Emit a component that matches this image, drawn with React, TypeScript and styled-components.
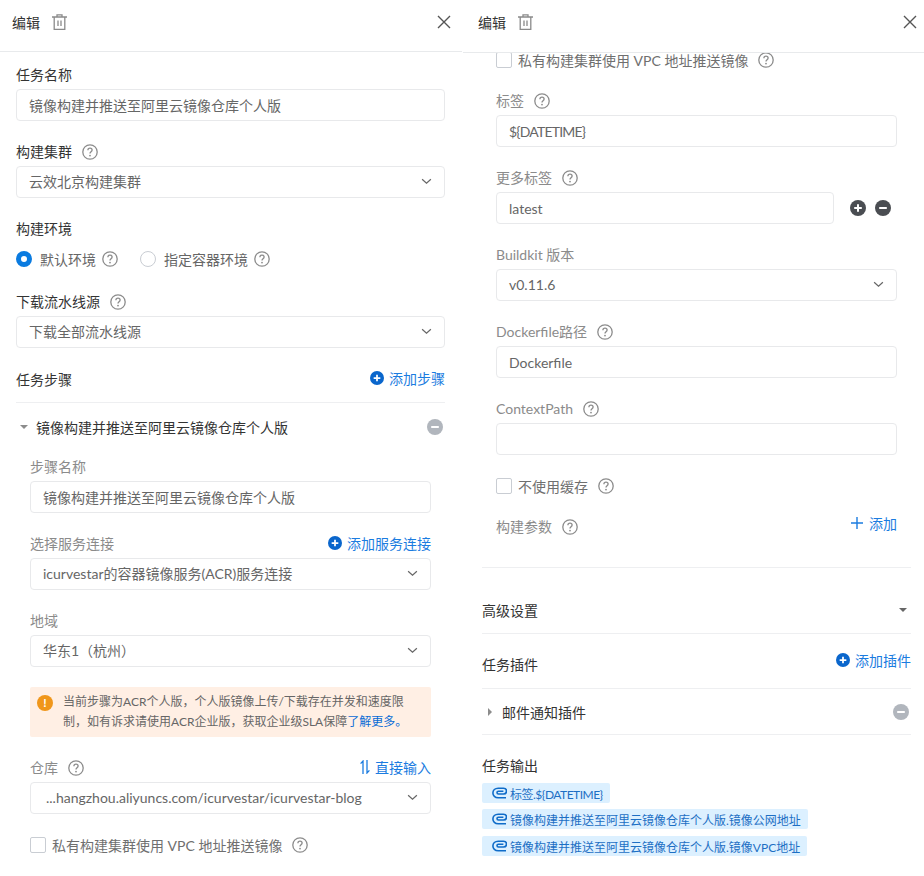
import styled, { createGlobalStyle } from "styled-components";

const GlobalStyle = createGlobalStyle`
  html, body {
    margin: 0;
    padding: 0;
    background: #fff;
  }
  body {
    font-family: Lato, "Noto Sans CJK SC", sans-serif;
    font-size: 14px;
    color: #333;
  }
`;

const HelpIcon = () => (
  <HelpSvg viewBox="0 0 16 16" width="16" height="16" fill="none">
    <circle cx="8" cy="8" r="7.2" stroke="#8c8c8c" strokeWidth="1.3" />
    <path
      d="M5.9 6.2c0-1.2.9-2 2.1-2s2.1.8 2.1 1.9c0 1.7-2.1 1.7-2.1 3.4"
      stroke="#8c8c8c"
      strokeWidth="1.3"
    />
    <circle cx="8" cy="11.6" r=".9" fill="#8c8c8c" />
  </HelpSvg>
);

const TrashIcon = () => (
  <svg viewBox="0 0 15 16" width="15" height="16" fill="none" stroke="#8a8a8a" strokeWidth="1.3">
    <path d="M0 3h15M5 3V.8h5V3M2.2 3v12.3h10.6V3M6 6.5v5.5M9 6.5v5.5" />
  </svg>
);

const CloseIcon = () => (
  <svg viewBox="0 0 14 14" width="14" height="14" stroke="#555" strokeWidth="1.4">
    <path d="M1 1l12 12M13 1L1 13" />
  </svg>
);

const Chevron = () => (
  <svg viewBox="0 0 12 8" width="11" height="7" fill="none" stroke="#666" strokeWidth="1.4">
    <path d="M1 1.5l5 4.5 5-4.5" />
  </svg>
);

const RoundIcon = ({ color, size, plus }: { color: string; size: number; plus?: boolean }) => (
  <svg viewBox="0 0 16 16" width={size} height={size}>
    <circle cx="8" cy="8" r="8" fill={color} />
    <path d={plus ? "M4.2 8h7.6M8 4.2v7.6" : "M4.2 8h7.6"} stroke="#fff" strokeWidth="2" />
  </svg>
);

const SwapIcon = () => (
  <svg viewBox="0 0 10 14" width="10" height="14" fill="none" stroke="#1b7ce0" strokeWidth="1.3">
    <path d="M3 14V1L.6 3.6M7 0v13l2.4-2.6" />
  </svg>
);

const ClipIcon = () => (
  <svg viewBox="0 0 15 12" width="15" height="12" fill="none" stroke="#0f6cc9" strokeWidth="1.6">
    <path d="M14 10.8H6.2C3 10.8.9 8.7.9 6S3 1.2 6.2 1.2h5.3c2 0 3 1.4 3 2.9S13.5 7 11.5 7H6.4C5.5 7 5 6.4 5 5.6s.5-1.4 1.4-1.4h5" />
  </svg>
);

const Label = ({ text, help }: { text: string; help?: boolean }) => (
  <LabelText>
    {text}
    {help && <HelpIcon />}
  </LabelText>
);

const App = () => {
  return (
    <>
      <GlobalStyle />
      <Page>
        <Panel $width={462}>
          <Header $height={52} $inset={0} $right={11}>
            <HeaderLeft>
              <HeaderTitle>编辑</HeaderTitle>
              <TrashIcon />
            </HeaderLeft>
            <CloseIcon />
          </Header>
          <Body $left={16} $right={17} $top={13}>
            <Field>
              <TopLabel>任务名称</TopLabel>
              <Box>镜像构建并推送至阿里云镜像仓库个人版</Box>
            </Field>
            <Field>
              <TopLabel>
                构建集群
                <HelpIcon />
              </TopLabel>
              <Box $select>
                云效北京构建集群
                <Chevron />
              </Box>
            </Field>
            <Field>
              <TopLabel>构建环境</TopLabel>
              <RadioRow>
                <RadioOption>
                  <Radio $checked />
                  默认环境
                  <HelpIcon />
                </RadioOption>
                <RadioOption>
                  <Radio />
                  指定容器环境
                  <HelpIcon />
                </RadioOption>
              </RadioRow>
            </Field>
            <Field>
              <TopLabel>
                下载流水线源
                <HelpIcon />
              </TopLabel>
              <Box $select>
                下载全部流水线源
                <Chevron />
              </Box>
            </Field>
            <SectionHead>
              <SectionTitle>任务步骤</SectionTitle>
              <AddLink>
                <RoundIcon color="#0a66cc" size={14} plus />
                添加步骤
              </AddLink>
            </SectionHead>
            <StepHead>
              <StepName>
                <CaretDown />
                镜像构建并推送至阿里云镜像仓库个人版
              </StepName>
              <RoundIcon color="#b1b6bd" size={16} />
            </StepHead>
            <Nested>
              <Field>
                <Label text="步骤名称" />
                <Box>镜像构建并推送至阿里云镜像仓库个人版</Box>
              </Field>
              <Field>
                <LabelRow>
                  <Label text="选择服务连接" />
                  <AddLink>
                    <RoundIcon color="#0a66cc" size={14} plus />
                    添加服务连接
                  </AddLink>
                </LabelRow>
                <Box $select>
                  icurvestar的容器镜像服务(ACR)服务连接
                  <Chevron />
                </Box>
              </Field>
              <Field>
                <Label text="地域" />
                <Box $select>
                  华东1（杭州）
                  <Chevron />
                </Box>
              </Field>
              <Alert>
                <AlertIcon>!</AlertIcon>
                <AlertText>
                  <div>当前步骤为ACR个人版，个人版镜像上传/下载存在并发和速度限</div>
                  <div>
                    制，如有诉求请使用ACR企业版，获取企业级SLA保障<BlueText>了解更多。</BlueText>
                  </div>
                </AlertText>
              </Alert>
              <Field>
                <LabelRow>
                  <Label text="仓库" help />
                  <AddLink>
                    <SwapIcon />
                    直接输入
                  </AddLink>
                </LabelRow>
                <Box $indent={15} $select>
                  ...hangzhou.aliyuncs.com/icurvestar/icurvestar-blog
                  <Chevron />
                </Box>
              </Field>
              <CheckRow>
                <CheckBox />
                <span>私有构建集群使用 VPC 地址推送镜像</span>
                <HelpIcon />
              </CheckRow>
            </Nested>
          </Body>
        </Panel>

        <Panel $width={461}>
          <Header $height={53} $inset={3} $right={7}>
            <HeaderLeft>
              <HeaderTitle>编辑</HeaderTitle>
              <TrashIcon />
            </HeaderLeft>
            <CloseIcon />
          </Header>
          <Body $left={19} $right={13} $top={-3}>
            <Nested>
              <CheckRow>
                <CheckBox />
                <span>私有构建集群使用 VPC 地址推送镜像</span>
                <HelpIcon />
              </CheckRow>
              <Field>
                <Label text="标签" help />
                <Box $tight>{"${DATETIME}"}</Box>
              </Field>
              <Field>
                <Label text="更多标签" help />
                <TagInputRow>
                  <Box>latest</Box>
                  <RoundIcon color="#4a4d52" size={16} plus />
                  <RoundIcon color="#4a4d52" size={16} />
                </TagInputRow>
              </Field>
              <Field>
                <Label text="Buildkit 版本" />
                <Box $select>
                  v0.11.6
                  <Chevron />
                </Box>
              </Field>
              <Field>
                <Label text="Dockerfile路径" help />
                <Box>Dockerfile</Box>
              </Field>
              <Field>
                <Label text="ContextPath" help />
                <Box />
              </Field>
              <CheckRow>
                <CheckBox />
                <span>不使用缓存</span>
                <HelpIcon />
              </CheckRow>
              <ParamRow>
                <Label text="构建参数" help />
                <PlainAdd>
                  <svg viewBox="0 0 12 12" width="12" height="12" stroke="#1b7ce0" strokeWidth="1.4">
                    <path d="M0 6h12M6 0v12" />
                  </svg>
                  添加
                </PlainAdd>
              </ParamRow>
            </Nested>
            <Block $height={65} $pad={13}>
              <SectionTitle>高级设置</SectionTitle>
              <CaretDown $dark />
            </Block>
            <Block $height={54} $pad={14}>
              <SectionTitle>任务插件</SectionTitle>
              <AddLink $raised>
                <RoundIcon color="#0a66cc" size={14} plus />
                添加插件
              </AddLink>
            </Block>
            <Block $height={45} $pad={12}>
              <StepName $small>
                <CaretRight />
                邮件通知插件
              </StepName>
              <MinusWrap>
                <RoundIcon color="#b1b6bd" size={16} />
              </MinusWrap>
            </Block>
            <OutputTitle>任务输出</OutputTitle>
            <TagList>
              <OutputTag $tight>
                <ClipIcon />
                {"标签.${DATETIME}"}
              </OutputTag>
              <OutputTag>
                <ClipIcon />
                镜像构建并推送至阿里云镜像仓库个人版.镜像公网地址
              </OutputTag>
              <OutputTag>
                <ClipIcon />
                镜像构建并推送至阿里云镜像仓库个人版.镜像VPC地址
              </OutputTag>
            </TagList>
          </Body>
        </Panel>
      </Page>
    </>
  );
};

export default App;

const Page = styled.div`
  display: flex;
  justify-content: space-between;
  width: 924px;
  height: 876px;
  overflow: hidden;
`;

const Panel = styled.div<{ $width: number }>`
  display: flex;
  flex-direction: column;
  width: ${({ $width }) => $width}px;
  height: 876px;
  overflow: hidden;
`;

const Header = styled.div<{ $height: number; $inset: number; $right: number }>`
  position: relative;
  z-index: 1;
  flex: none;
  display: flex;
  justify-content: space-between;
  align-items: center;
  box-sizing: border-box;
  height: ${({ $height }) => $height}px;
  padding: 0 ${({ $right }) => $right}px 8px ${({ $inset }) => 12 + $inset}px;
  background: #fff;
  border-bottom: 1px solid #e8eaec;
`;

const HeaderLeft = styled.div`
  display: flex;
  align-items: center;
  gap: 12px;
`;

const HeaderTitle = styled.span`
  font-size: 14px;
  color: #333;
`;

const Body = styled.div<{ $left: number; $right: number; $top: number }>`
  flex: 1;
  min-height: 0;
  padding: 0 ${({ $right }) => $right}px 0 ${({ $left }) => $left}px;
  margin-top: ${({ $top }) => $top}px;
`;

const Field = styled.div`
  margin-bottom: 21px;
`;

const TopLabel = styled.div`
  display: flex;
  align-items: center;
  gap: 10px;
  height: 20px;
  margin-bottom: 4px;
  color: #333;
  line-height: 20px;
`;

const LabelText = styled.div`
  display: flex;
  align-items: center;
  gap: 10px;
  height: 20px;
  margin-bottom: 4px;
  color: #8b8b8b;
  line-height: 20px;
`;

const LabelRow = styled.div`
  display: flex;
  justify-content: space-between;
`;

const HelpSvg = styled.svg`
  flex: none;
`;

const Box = styled.div<{ $indent?: number; $tight?: boolean; $select?: boolean }>`
  flex: 1;
  display: flex;
  justify-content: space-between;
  align-items: center;
  box-sizing: border-box;
  height: 32px;
  padding: 0 12px ${({ $select }) => ($select ? "2px" : "0")} ${({ $indent }) => $indent ?? 12}px;
  border: 1px solid #e8e9eb;
  border-radius: 4px;
  color: #666;
  white-space: nowrap;
  ${({ $tight }) => ($tight ? "letter-spacing: -0.8px;" : "")}
`;

const RadioRow = styled.div`
  display: flex;
  align-items: center;
  gap: 22px;
  height: 22px;
  margin-top: 9px;
  margin-bottom: 22px;
`;

const RadioOption = styled.div`
  display: flex;
  align-items: center;
  gap: 6px;
  color: #666;
`;

const Radio = styled.span<{ $checked?: boolean }>`
  box-sizing: border-box;
  width: 16px;
  height: 16px;
  margin-right: 2px;
  border-radius: 50%;
  border: ${({ $checked }) => ($checked ? "5px solid #0a7be0" : "1px solid #c9cdd3")};
  background: #fff;
`;

const SectionHead = styled.div`
  display: flex;
  justify-content: space-between;
  align-items: center;
  height: 20px;
  padding-bottom: 13px;
  border-bottom: 1px solid #eeeff1;
`;

const SectionTitle = styled.span`
  color: #333;
`;

const AddLink = styled.div<{ $raised?: boolean }>`
  display: flex;
  align-items: center;
  gap: 5px;
  height: 20px;
  margin-top: -1px;
  margin-bottom: ${({ $raised }) => ($raised ? "4px" : "1px")};
  color: #1b7ce0;
`;

const PlainAdd = styled.div`
  display: flex;
  align-items: center;
  gap: 6px;
  height: 20px;
  margin-top: -4px;
  color: #1b7ce0;
`;

const StepHead = styled.div`
  display: flex;
  justify-content: space-between;
  align-items: center;
  height: 48px;
  padding: 0 2px 0 4px;
  margin-bottom: 6px;
`;

const StepName = styled.div<{ $small?: boolean }>`
  display: flex;
  align-items: center;
  gap: ${({ $small }) => ($small ? "10px" : "8px")};
  color: #333;
  ${({ $small }) => ($small ? "padding-left: 6px;" : "")}
`;

const CaretDown = styled.span<{ $dark?: boolean }>`
  width: 0;
  height: 0;
  border-left: 4px solid transparent;
  border-right: 4px solid transparent;
  border-top: 4px solid ${({ $dark }) => ($dark ? "#666" : "#8c8c8c")};
  ${({ $dark }) => ($dark ? "margin: 0 4px 8px 0;" : "")}
`;

const CaretRight = styled.span`
  width: 0;
  height: 0;
  border-top: 4px solid transparent;
  border-bottom: 4px solid transparent;
  border-left: 4px solid #8c8c8c;
`;

const MinusWrap = styled.div`
  display: flex;
  margin: 0 2px 2px 0;
`;

const Nested = styled.div`
  padding: 0 14px;
`;

const Alert = styled.div`
  display: flex;
  gap: 10px;
  box-sizing: border-box;
  height: 50px;
  margin: -1px 0 21px;
  padding: 5px 7px;
  background: #ffefe4;
  border-radius: 2px;
`;

const AlertIcon = styled.span`
  flex: none;
  width: 16px;
  height: 16px;
  margin-top: 3px;
  border-radius: 50%;
  background: #f0961a;
  color: #fff;
  font-size: 12px;
  font-weight: 700;
  line-height: 16px;
  text-align: center;
`;

const AlertText = styled.div`
  font-size: 12px;
  line-height: 20px;
  color: #666;
  white-space: nowrap;
`;

const BlueText = styled.span`
  color: #0a6cd6;
`;

const CheckRow = styled.div`
  display: flex;
  align-items: center;
  height: 20px;
  margin-bottom: 21px;
  color: #6f6f6f;

  span:last-of-type {
    margin: 0 10px 0 6px;
  }
`;

const CheckBox = styled.span`
  flex: none;
  box-sizing: border-box;
  width: 16px;
  height: 16px;
  border: 1px solid #c9cdd3;
  border-radius: 2px;
`;

const TagInputRow = styled.div`
  display: flex;
  align-items: center;
  gap: 9px;
  padding-right: 6px;

  > div {
    margin-right: 7px;
  }
`;

const ParamRow = styled.div`
  display: flex;
  justify-content: space-between;
  align-items: flex-start;
  height: 50px;
`;

const Block = styled.div<{ $height: number; $pad: number }>`
  display: flex;
  justify-content: space-between;
  align-items: flex-end;
  box-sizing: border-box;
  height: ${({ $height }) => $height + 1}px;
  padding-bottom: ${({ $pad }) => $pad}px;
  border-top: 1px solid #eeeff1;
  &:nth-last-of-type(3) {
    height: ${({ $height }) => $height + 2}px;
    border-bottom: 1px solid #eeeff1;
  }
`;

const OutputTitle = styled.div`
  height: 20px;
  margin-top: 21px;
  margin-bottom: 7px;
  line-height: 20px;
  color: #333;
`;

const TagList = styled.div`
  display: flex;
  flex-direction: column;
  align-items: flex-start;
  gap: 6px;

  > div:last-child {
    margin-top: 1px;
  }
`;

const OutputTag = styled.div<{ $tight?: boolean }>`
  display: flex;
  align-items: center;
  gap: 3px;
  height: 20px;
  padding: 0 7px 0 10px;
  border-radius: 2px;
  background: #dcf0ff;
  color: #1d6fc4;
  font-size: 12px;
  white-space: nowrap;
  ${({ $tight }) => ($tight ? "letter-spacing: -0.5px;" : "")}
`;
